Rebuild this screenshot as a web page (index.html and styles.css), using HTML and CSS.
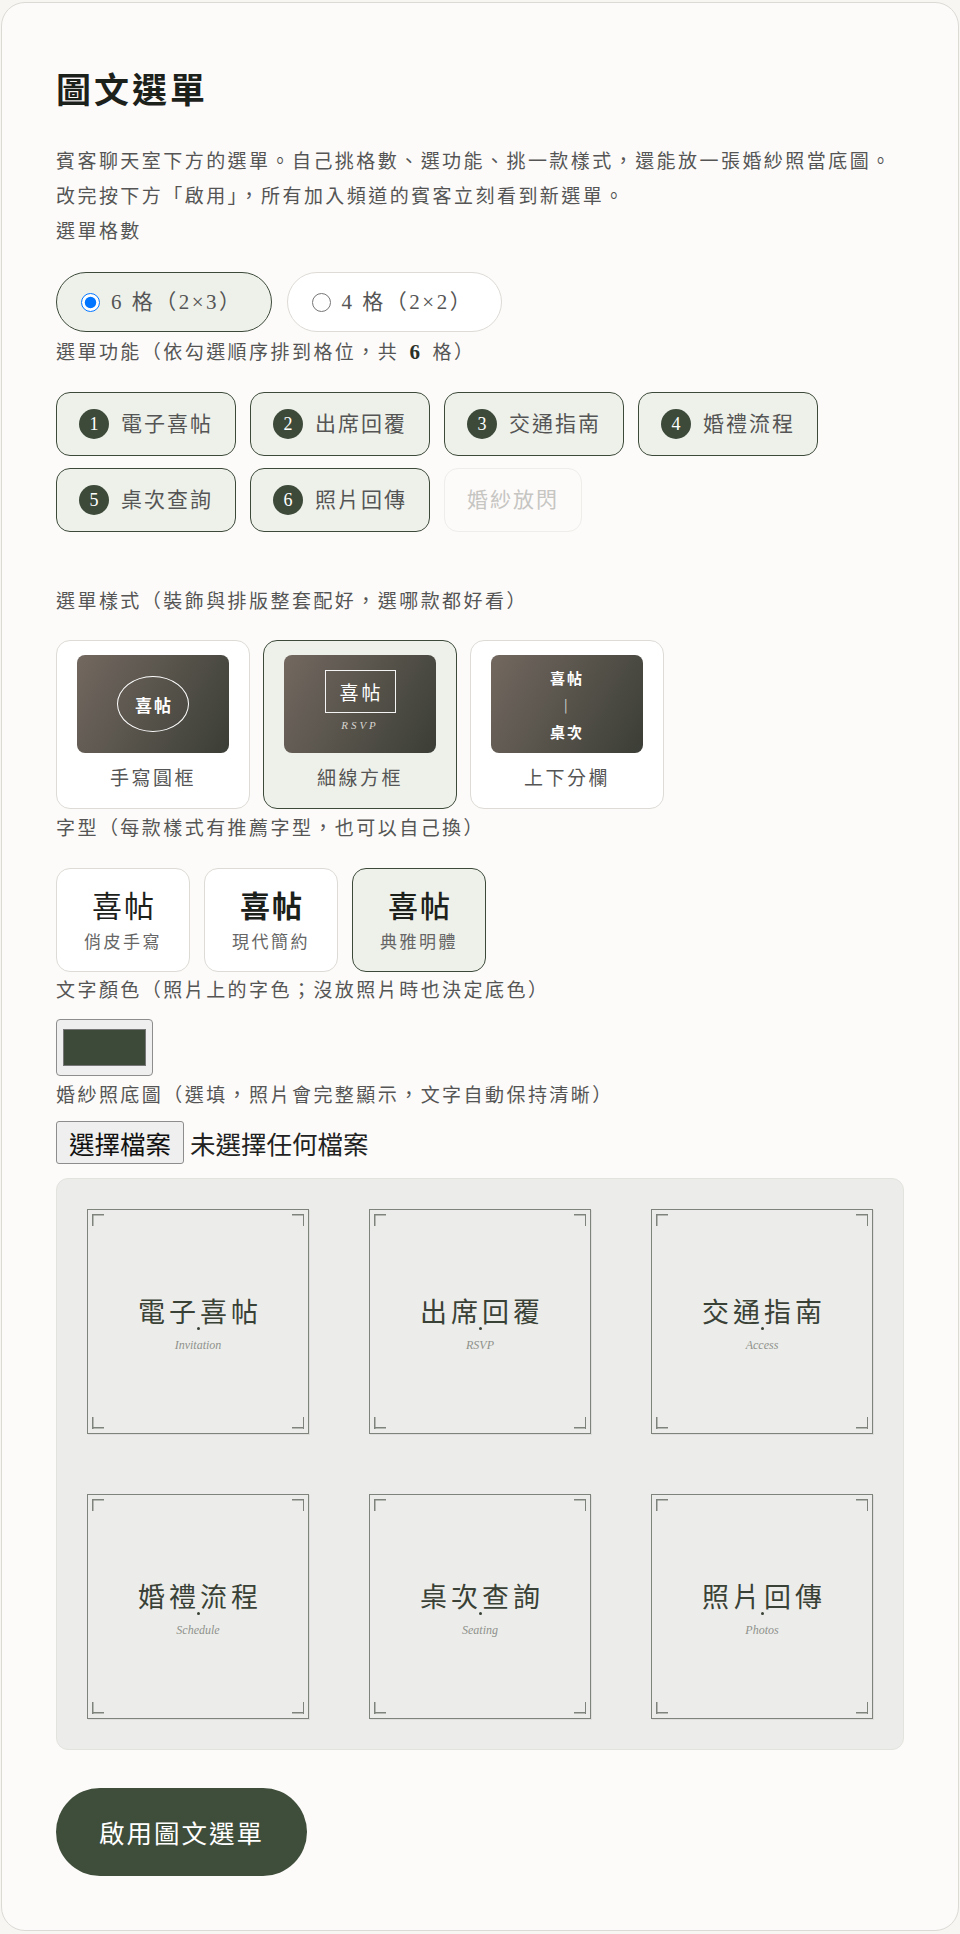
FILE: index.html
```html
<!DOCTYPE html>
<html lang="zh-Hant">
<head>
  <meta charset="UTF-8">
  <title>圖文選單</title>
  <link rel="stylesheet" href="styles.css">
</head>
<body>
<div class="container">
  <h2>圖文選單</h2>
  <p class="desc">賓客聊天室下方的選單。自己挑格數、選功能、挑一款樣式，還能放一張婚紗照當底圖。改完按下方「啟用」，所有加入頻道的賓客立刻看到新選單。</p>

  <div class="label">選單格數</div>
  <div class="grid-options">
    <label class="pill active"><input type="radio" name="grid" checked><span>6 格（2×3）</span></label>
    <label class="pill"><input type="radio" name="grid"><span>4 格（2×2）</span></label>
  </div>

  <div class="label">選單功能（依勾選順序排到格位，共 <b>6</b> 格）</div>
  <div class="features">
    <div class="chip"><span class="num">1</span>電子喜帖</div>
    <div class="chip"><span class="num">2</span>出席回覆</div>
    <div class="chip"><span class="num">3</span>交通指南</div>
    <div class="chip"><span class="num">4</span>婚禮流程</div>
    <div class="chip"><span class="num">5</span>桌次查詢</div>
    <div class="chip"><span class="num">6</span>照片回傳</div>
    <div class="chip off">婚紗放閃</div>
  </div>

  <div class="label">選單樣式（裝飾與排版整套配好，選哪款都好看）</div>
  <div class="styles">
    <div class="style-card">
      <div class="thumb"><span class="ring">喜帖</span></div>
      <div class="style-name">手寫圓框</div>
    </div>
    <div class="style-card active">
      <div class="thumb boxed"><span class="box">喜帖</span><span class="rsvp">RSVP</span></div>
      <div class="style-name">細線方框</div>
    </div>
    <div class="style-card">
      <div class="thumb split"><b>喜帖</b><i>|</i><b>桌次</b></div>
      <div class="style-name">上下分欄</div>
    </div>
  </div>

  <div class="label">字型（每款樣式有推薦字型，也可以自己換）</div>
  <div class="fonts">
    <div class="font-card">
      <div class="font-sample cute">喜帖</div>
      <div class="font-name">俏皮手寫</div>
    </div>
    <div class="font-card">
      <div class="font-sample modern">喜帖</div>
      <div class="font-name">現代簡約</div>
    </div>
    <div class="font-card active">
      <div class="font-sample elegant">喜帖</div>
      <div class="font-name">典雅明體</div>
    </div>
  </div>

  <div class="label">文字顏色（照片上的字色；沒放照片時也決定底色）</div>
  <div class="color-pick">
    <input type="color" value="#3d4a3a">
  </div>

  <div class="label">婚紗照底圖（選填，照片會完整顯示，文字自動保持清晰）</div>
  <div class="file-row">
    <label class="file-btn">選擇檔案<input type="file" accept="image/*" hidden></label>
    <span>未選擇任何檔案</span>
  </div>

  <div class="board">
    <div class="tile"><div class="tile-name">電子喜帖</div><div class="tile-dot"></div><div class="tile-en">Invitation</div></div>
    <div class="tile"><div class="tile-name">出席回覆</div><div class="tile-dot"></div><div class="tile-en">RSVP</div></div>
    <div class="tile"><div class="tile-name">交通指南</div><div class="tile-dot"></div><div class="tile-en">Access</div></div>
    <div class="tile"><div class="tile-name">婚禮流程</div><div class="tile-dot"></div><div class="tile-en">Schedule</div></div>
    <div class="tile"><div class="tile-name">桌次查詢</div><div class="tile-dot"></div><div class="tile-en">Seating</div></div>
    <div class="tile"><div class="tile-name">照片回傳</div><div class="tile-dot"></div><div class="tile-en">Photos</div></div>
  </div>

  <button class="btn">啟用圖文選單</button>
</div>
</body>
</html>
```

FILE: styles.css
```css
* { box-sizing: border-box; }
body {
  margin: 0;
  padding: 2px 1px;
  background: #f7f6f3;
  font-family: "Liberation Serif", "Noto Sans CJK TC", serif;
  font-size: 19px;
  line-height: 35px;
  letter-spacing: 2.45px;
  color: #555;
}
.container {
  background: #fcfbf9;
  border: 1px solid #dcdad5;
  border-radius: 24px;
  padding: 65px 54px 54px;
}
h2 {
  margin: 0;
  font-family: "Noto Sans CJK TC", sans-serif;
  font-size: 35px;
  font-weight: 700;
  line-height: 40px;
  letter-spacing: 3px;
  color: #1d211b;
}
.desc {
  margin: 36px 0 0;
}
.label b {
  color: #2a2f28;
  font-size: 21px;
  padding: 0 3px;
}

/* 格數 */
.grid-options {
  display: flex;
  gap: 15px;
  margin: 23px 0 3px;
}
.pill {
  display: flex;
  align-items: center;
  gap: 11px;
  height: 60px;
  padding: 0 28px 0 24px;
  border: 1.5px solid #dedbd6;
  border-radius: 30px;
  background: #fff;
  font-size: 21px;
  letter-spacing: 2.5px;
  cursor: pointer;
}
.pill.active {
  border-color: #3d4a3a;
  background: #eef1ea;
}
.pill input {
  width: 19px;
  height: 19px;
  margin: 0;
}

/* 功能 */
.features {
  display: flex;
  flex-wrap: wrap;
  gap: 12px 14px;
  margin: 22px 0 52px;
}
.chip {
  display: flex;
  align-items: center;
  gap: 12px;
  height: 64px;
  padding: 0 22px;
  border: 1.5px solid #3d4a3a;
  border-radius: 14px;
  background: #eef1ea;
  font-size: 21px;
  letter-spacing: 2px;
  color: #555;
}
.chip .num {
  display: flex;
  align-items: center;
  justify-content: center;
  width: 30px;
  height: 30px;
  border-radius: 50%;
  background: #3d4a3a;
  color: #fff;
  font-size: 18px;
  letter-spacing: 0;
}
.chip.off {
  border-color: #efedea;
  background: transparent;
  color: #c6c5c2;
}

/* 樣式 */
.styles {
  display: flex;
  gap: 13px;
  margin: 21px 0 2px;
}
.style-card {
  width: 194px;
  padding: 14px 20px 12px;
  border: 1px solid #dedbd6;
  border-radius: 14px;
  background: #fff;
  text-align: center;
}
.style-card.active,
.font-card.active {
  border: 1.5px solid #3d4a3a;
  background: #eef1ea;
}
.thumb {
  display: flex;
  flex-direction: column;
  align-items: center;
  justify-content: center;
  height: 98px;
  border-radius: 8px;
  background: linear-gradient(120deg, #736860, #3b3e36);
  color: #fff;
  font-family: "Noto Sans CJK TC", sans-serif;
}
.ring {
  display: flex;
  align-items: center;
  justify-content: center;
  width: 72px;
  height: 56px;
  border: 1.5px solid #fff;
  border-radius: 50%;
  font-size: 17px;
  font-weight: 700;
  letter-spacing: 2px;
  padding-left: 2px;
}
.boxed {
  padding-bottom: 6px;
}
.box {
  display: flex;
  align-items: center;
  justify-content: center;
  width: 71px;
  height: 43px;
  border: 1.5px solid #f4f4f4;
  font-size: 19px;
  letter-spacing: 3px;
  padding-left: 3px;
}
.rsvp {
  margin-top: 5px;
  font-family: "Liberation Serif", serif;
  font-style: italic;
  font-size: 11px;
  line-height: 14px;
  letter-spacing: 3px;
  color: #d8d4cf;
}
.split b {
  font-size: 15px;
  line-height: 27px;
  letter-spacing: 2px;
}
.split i {
  font-style: normal;
  font-size: 13px;
  line-height: 27px;
  opacity: .75;
}
.style-name {
  margin-top: 8px;
}

/* 字型 */
.fonts {
  display: flex;
  gap: 14px;
  margin: 22px 0 1px;
}
.font-card {
  display: flex;
  flex-direction: column;
  align-items: center;
  justify-content: center;
  width: 134px;
  height: 104px;
  border: 1px solid #dedbd6;
  border-radius: 14px;
  background: #fff;
}
.font-sample {
  font-family: "Noto Sans CJK TC", sans-serif;
  font-size: 30px;
  line-height: 36px;
  letter-spacing: 2px;
  padding-left: 2px;
  color: #1d211b;
}
.font-sample.cute { font-weight: 400; }
.font-sample.modern { font-weight: 700; }
.font-sample.elegant { font-weight: 500; }
.font-name {
  margin-top: 9px;
  font-size: 17px;
  line-height: 24px;
  letter-spacing: 2.5px;
  color: #666;
}

/* 顏色 */
.color-pick {
  margin: 11px 0 2px;
}
.color-pick input {
  display: block;
  width: 97px;
  height: 57px;
  padding: 9px 6px;
  border: 1px solid #8d8d8d;
  border-radius: 4px;
  background: #efefef;
}
.color-pick input::-webkit-color-swatch-wrapper { padding: 0; }
.color-pick input::-webkit-color-swatch {
  border: 1px solid #777;
  border-radius: 0;
}

/* 底圖 */
.file-row {
  display: flex;
  align-items: center;
  gap: 6px;
  margin: 8px 0 14px;
  font-family: "Noto Sans CJK TC", sans-serif;
  font-size: 25.5px;
  letter-spacing: 0;
  color: #222;
}
.file-btn {
  display: flex;
  align-items: center;
  height: 43px;
  padding: 0 12px;
  border: 1px solid #8d8d8d;
  border-radius: 3px;
  background: #efefef;
  color: #111;
}

/* 預覽 */
.board {
  display: grid;
  grid-template-columns: repeat(3, 1fr);
  grid-template-rows: repeat(2, 1fr);
  gap: 60px;
  padding: 30px;
  aspect-ratio: 2500 / 1686;
  border: 1px solid #e2e2de;
  border-radius: 12px;
  background: #ecedea;
}
.tile {
  --line: #7e847c;
  position: relative;
  display: flex;
  flex-direction: column;
  align-items: center;
  justify-content: center;
  padding-top: 6px;
  border: 1.5px solid var(--line);
  box-shadow: 1px 1px 0 rgba(0, 0, 0, 0.06);
  color: #3a4136;
}
.tile::before {
  content: "";
  position: absolute;
  inset: 4px;
  background:
    linear-gradient(var(--line), var(--line)) top left / 12px 1.5px no-repeat,
    linear-gradient(var(--line), var(--line)) top left / 1.5px 12px no-repeat,
    linear-gradient(var(--line), var(--line)) top right / 12px 1.5px no-repeat,
    linear-gradient(var(--line), var(--line)) top right / 1.5px 12px no-repeat,
    linear-gradient(var(--line), var(--line)) bottom left / 12px 1.5px no-repeat,
    linear-gradient(var(--line), var(--line)) bottom left / 1.5px 12px no-repeat,
    linear-gradient(var(--line), var(--line)) bottom right / 12px 1.5px no-repeat,
    linear-gradient(var(--line), var(--line)) bottom right / 1.5px 12px no-repeat;
}
.tile-name {
  font-family: "Noto Sans CJK TC", sans-serif;
  font-size: 27px;
  line-height: 32px;
  letter-spacing: 4px;
  padding-left: 4px;
}
.tile-dot {
  width: 3px;
  height: 3px;
  border-radius: 50%;
  background: #3a4136;
}
.tile-en {
  margin-top: 7px;
  font-family: "Liberation Serif", serif;
  font-style: italic;
  font-size: 12px;
  line-height: 16px;
  letter-spacing: 0;
  color: #8f918c;
}

.btn {
  display: block;
  height: 88px;
  margin-top: 38px;
  padding: 0 43px;
  border: none;
  border-radius: 44px;
  background: #3f4d3b;
  color: #fff;
  font-family: "Noto Sans CJK TC", sans-serif;
  font-size: 25.5px;
  letter-spacing: 2px;
  cursor: pointer;
}
.btn:hover {
  background: #34402f;
}
```
